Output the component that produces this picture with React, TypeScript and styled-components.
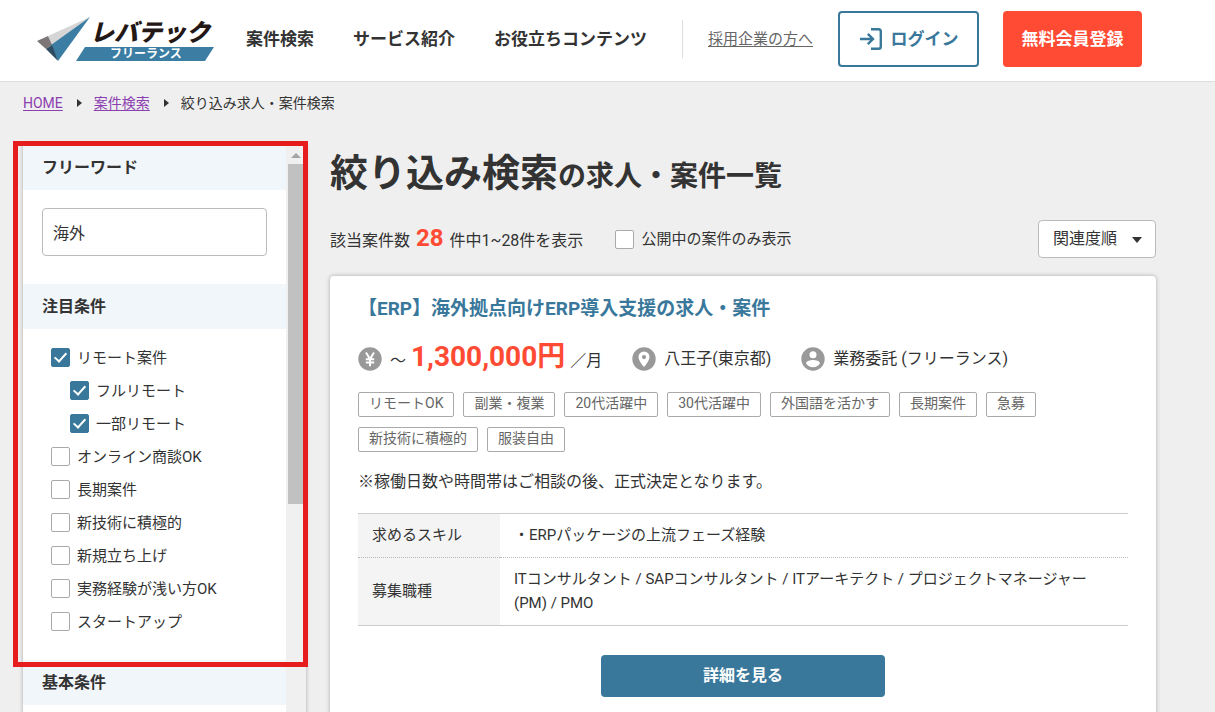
import React from "react";
import styled, { createGlobalStyle, css } from "styled-components";

const blue = "#39789b";
const red = "#ff4b33";

const GlobalStyle = createGlobalStyle`
  *, *::before, *::after { box-sizing: border-box; }
  body {
    margin: 0;
    background: #efefef;
    color: #333;
    font-family: Roboto, "Noto Sans CJK JP", sans-serif;
    font-size: 16px;
    line-height: 24px;
  }
  h1, h2, h3, p, ul { margin: 0; padding: 0; }
  ul { list-style: none; }
  input, select, button { font: inherit; color: inherit; }
`;

const Header = styled.header`
  display: flex;
  align-items: center;
  height: 82px;
  padding: 0 73px 4px 37px;
  background: #fff;
  border-bottom: 1px solid #dedede;
`;

const LogoLink = styled.a`
  display: block;
  height: 48px;
  svg { display: block; overflow: visible; }
`;

const Nav = styled.nav`
  display: flex;
  flex: 1;
  gap: 39px;
  margin-left: 30px;
`;

const NavLink = styled.a`
  color: #333;
  font-size: 17px;
  font-weight: 700;
  text-decoration: none;
  white-space: nowrap;
`;

const Companies = styled.div`
  display: flex;
  align-items: center;
  height: 38px;
  padding: 0 25px;
  border-left: 1px solid #dedede;
`;

const CompanyLink = styled.a`
  color: #666;
  font-size: 15px;
  white-space: nowrap;
  text-underline-offset: 2px;
`;

const HeaderButton = styled.button<{ $primary?: boolean }>`
  display: flex;
  align-items: center;
  justify-content: center;
  gap: 8px;
  height: 56px;
  padding: 0;
  border-radius: 4px;
  font-size: 17px;
  font-weight: 700;
  white-space: nowrap;
  ${(p) =>
    p.$primary
      ? css`
          width: 139px;
          margin-left: 24px;
          border: 0;
          background: ${red};
          color: #fff;
        `
      : css`
          width: 141px;
          border: 2px solid ${blue};
          background: #fff;
          color: ${blue};
        `}
`;

const Breadcrumb = styled.nav`
  display: flex;
  align-items: center;
  gap: 14px;
  padding: 9px 23px 0;
  font-size: 14px;
  a { color: #8b3fb0; text-underline-offset: 2px; }
`;

const Crumb = styled.span`
  display: flex;
  align-items: center;
  gap: 12px;
  & + &::before {
    content: "";
    border-left: 5px solid #333;
    border-top: 4px solid transparent;
    border-bottom: 4px solid transparent;
  }
`;

const Page = styled.div`
  display: grid;
  grid-template-columns: 283px minmax(0, 1fr);
  gap: 24px;
  padding: 30px 59px 24px 23px;
`;

const Sidebar = styled.aside`
  position: relative;
  display: flex;
  background: #fff;
  box-shadow: 0 0 4px rgba(0, 0, 0, 0.3);
`;

const Filters = styled.form`
  flex: 1;
`;

const FilterHeading = styled.h2`
  padding: 11px 19px 10px;
  background: #f1f6fb;
  font-size: 16px;
  font-weight: 700;
  line-height: 24px;
`;

const KeywordField = styled.div`
  padding: 18px 19px 28px;
`;

const KeywordInput = styled.input`
  display: block;
  width: 100%;
  height: 48px;
  padding: 0 10px;
  border: 1px solid #bbb;
  border-radius: 4px;
  background: #fff;
`;

const FilterList = styled.ul`
  padding: 12px 28px 22px;
`;

const FilterItem = styled.li<{ $nested?: boolean }>`
  padding-left: ${(p) => (p.$nested ? 19 : 0)}px;
`;

const CheckLabel = styled.label`
  display: flex;
  align-items: center;
  gap: 7px;
  height: 33px;
  font-size: 15px;
`;

const Checkbox = styled.input.attrs({ type: "checkbox" })`
  display: flex;
  justify-content: center;
  flex: none;
  appearance: none;
  width: 19px;
  height: 19px;
  margin: 0;
  border: 1px solid #aaa;
  border-radius: 2px;
  background: #fff;
  &:checked {
    border-color: ${blue};
    background: ${blue};
  }
  &:checked::after {
    content: "";
    width: 7px;
    height: 12px;
    margin-top: 1px;
    border: solid #fff;
    border-width: 0 2px 2px 0;
    transform: rotate(42deg);
  }
`;

const ScrollTrack = styled.div`
  display: flex;
  flex-direction: column;
  align-items: center;
  width: 20px;
  padding-top: 8px;
  background: #f0f0f0;
`;

const ScrollArrow = styled.span`
  border-bottom: 5px solid #a3a3a3;
  border-left: 5px solid transparent;
  border-right: 5px solid transparent;
`;

const ScrollThumb = styled.span`
  width: 16px;
  height: 340px;
  margin-top: 6px;
  background: #c1c1c1;
`;

const Highlight = styled.div`
  position: absolute;
  top: -4px;
  left: -10px;
  right: -2px;
  height: 526px;
  border: 5px solid #e71c1c;
  pointer-events: none;
`;

const Title = styled.h1`
  font-size: 38px;
  font-weight: 700;
  line-height: 56px;
  small { font-size: 28px; }
`;

const ResultBar = styled.div`
  display: flex;
  align-items: center;
  gap: 32px;
  margin: 15px 0 18px;
`;

const Count = styled.p`
  strong {
    margin: 0 2px;
    color: ${red};
    font-size: 24px;
  }
`;

const SortBox = styled.div`
  position: relative;
  margin-left: auto;
  &::after {
    content: "";
    position: absolute;
    top: 17px;
    right: 14px;
    border-top: 6px solid #333;
    border-left: 5px solid transparent;
    border-right: 5px solid transparent;
    pointer-events: none;
  }
`;

const SortSelect = styled.select`
  display: block;
  appearance: none;
  width: 118px;
  height: 38px;
  padding: 0 14px;
  border: 1px solid #bbb;
  border-radius: 4px;
  background: #fff;
`;

const Card = styled.article`
  padding: 19px 28px 32px;
  border-radius: 4px;
  background: #fff;
  box-shadow: 0 0 4px rgba(0, 0, 0, 0.3);
`;

const JobTitle = styled.h3`
  font-size: 19px;
  font-weight: 700;
  line-height: 28px;
  a { color: ${blue}; text-decoration: none; }
`;

const MetaRow = styled.ul`
  display: flex;
  flex-wrap: wrap;
  align-items: center;
  gap: 30px;
  margin-top: 16px;
`;

const Meta = styled.li`
  display: flex;
  align-items: center;
  gap: 8px;
  height: 40px;
  svg { flex: none; }
`;

const Pay = styled.strong`
  color: ${red};
  font-size: 28px;
  font-weight: 700;
`;

const Price = styled.span`
  display: flex;
  align-items: baseline;
  gap: 5px;
`;

const Tags = styled.ul`
  display: flex;
  flex-wrap: wrap;
  gap: 10px 9px;
  margin-top: 13px;
`;

const Tag = styled.li`
  height: 25px;
  padding: 0 10px;
  border: 1px solid #aaa;
  border-radius: 2px;
  color: #666;
  font-size: 14px;
  line-height: 21px;
`;

const Note = styled.p`
  margin: 18px 0 19px;
`;

const SpecTable = styled.table`
  width: 100%;
  border-collapse: collapse;
  border-top: 1px solid #ccc;
  border-bottom: 1px solid #ccc;
  font-size: 15px;
  tr + tr { border-top: 1px dotted #bbb; }
  th {
    width: 142px;
    background: #f4f4f4;
    font-weight: 400;
    text-align: left;
  }
  th, td { padding: 9px 14px 10px; }
`;

const DetailButton = styled.button`
  display: block;
  width: 284px;
  height: 42px;
  margin: 29px auto 0;
  padding: 0;
  border: 0;
  border-radius: 4px;
  background: ${blue};
  color: #fff;
  font-weight: 700;
`;

const Logo = () => (
  <svg width="179" height="48" viewBox="0 0 179 48" role="img" aria-label="レバテック フリーランス">
    <path d="M11 21 53 2 14 31z" fill="#d6d6d6" />
    <path d="M53 2 21 46 14 30z" fill="#3c7ea3" />
    <path d="M0 26 11 21 15 30 9 34z" fill="#7c7677" />
    <path d="M9 34 15 30 21 46z" fill="#2d4c62" />
    <path d="M48 32H177L168 46H39z" fill="#3c7ea3" />
    <text x="53" y="26" fill="#231815" fontFamily="'Noto Sans CJK JP', sans-serif" fontSize="24" fontWeight="900" fontStyle="italic">
      レバテック
    </text>
    <text x="73" y="43" fill="#fff" fontFamily="'Noto Sans CJK JP', sans-serif" fontSize="12" fontWeight="700">
      フリーランス
    </text>
  </svg>
);

const LoginIcon = () => (
  <svg width="24" height="24" viewBox="0 0 24 24" fill="none" stroke={blue} strokeWidth="2.4" aria-hidden="true">
    <path d="M12 2.200H19.500Q21.800 2.200 21.800 4.500V19.500Q21.800 21.800 19.500 21.800H12" />
    <path d="M1 12H13.500M8.800 6.800 14 12 8.800 17.200" />
  </svg>
);

const YenIcon = () => (
  <svg width="24" height="24" viewBox="0 0 24 24" aria-hidden="true">
    <circle cx="12" cy="12" r="11.700" fill="#999" />
    <path d="M8 5.500 12 12 16 5.500M12 12V19.200M7.800 12.200H16.200M7.800 15.600H16.200" fill="none" stroke="#fff" strokeWidth="2" />
  </svg>
);

const PinIcon = () => (
  <svg width="24" height="24" viewBox="0 0 24 24" aria-hidden="true">
    <circle cx="12" cy="12" r="11.700" fill="#999" />
    <path fill="#fff" fillRule="evenodd" d="M12 4.500a5.500 5.500 0 0 0-5.500 5.500C6.500 14 12 20 12 20s5.500-6 5.500-10A5.500 5.500 0 0 0 12 4.500zm0 3.500a2.100 2.100 0 1 1 0 4.200A2.100 2.100 0 0 1 12 8z" />
  </svg>
);

const PersonIcon = () => (
  <svg width="24" height="24" viewBox="0 0 24 24" aria-hidden="true">
    <circle cx="12" cy="12" r="11.700" fill="#999" />
    <circle cx="12" cy="7.800" r="3.500" fill="#fff" />
    <path d="M5 16.300C5 14 9.500 12.900 12 12.900S19 14 19 16.300C17.500 18.700 15 20.300 12 20.300S6.500 18.700 5 16.300z" fill="#fff" />
  </svg>
);

const conditions = [
  { label: "リモート案件", checked: true },
  { label: "フルリモート", checked: true, nested: true },
  { label: "一部リモート", checked: true, nested: true },
  { label: "オンライン商談OK" },
  { label: "長期案件" },
  { label: "新技術に積極的" },
  { label: "新規立ち上げ" },
  { label: "実務経験が浅い方OK" },
  { label: "スタートアップ" },
];

const tags = [
  "リモートOK", "副業・複業", "20代活躍中", "30代活躍中", "外国語を活かす",
  "長期案件", "急募", "新技術に積極的", "服装自由",
];

export default function App() {
  return (
    <>
      <GlobalStyle />
      <Header>
        <LogoLink href="#"><Logo /></LogoLink>
        <Nav>
          <NavLink href="#">案件検索</NavLink>
          <NavLink href="#">サービス紹介</NavLink>
          <NavLink href="#">お役立ちコンテンツ</NavLink>
        </Nav>
        <Companies><CompanyLink href="#">採用企業の方へ</CompanyLink></Companies>
        <HeaderButton type="button"><LoginIcon />ログイン</HeaderButton>
        <HeaderButton type="button" $primary>無料会員登録</HeaderButton>
      </Header>

      <Breadcrumb>
        <Crumb><a href="#">HOME</a></Crumb>
        <Crumb><a href="#">案件検索</a></Crumb>
        <Crumb>絞り込み求人・案件検索</Crumb>
      </Breadcrumb>

      <Page>
        <Sidebar>
          <Filters>
            <FilterHeading><label htmlFor="keyword">フリーワード</label></FilterHeading>
            <KeywordField>
              <KeywordInput id="keyword" type="text" defaultValue="海外" />
            </KeywordField>
            <FilterHeading>注目条件</FilterHeading>
            <FilterList>
              {conditions.map((c) => (
                <FilterItem key={c.label} $nested={c.nested}>
                  <CheckLabel>
                    <Checkbox defaultChecked={c.checked} />
                    {c.label}
                  </CheckLabel>
                </FilterItem>
              ))}
            </FilterList>
            <FilterHeading>基本条件</FilterHeading>
          </Filters>
          <ScrollTrack>
            <ScrollArrow />
            <ScrollThumb />
          </ScrollTrack>
          <Highlight />
        </Sidebar>

        <main>
          <Title>絞り込み検索<small>の求人・案件一覧</small></Title>
          <ResultBar>
            <Count>該当案件数 <strong>28</strong> 件中1~28件を表示</Count>
            <CheckLabel><Checkbox />公開中の案件のみ表示</CheckLabel>
            <SortBox>
              <SortSelect aria-label="並び順" defaultValue="関連度順">
                <option>関連度順</option>
              </SortSelect>
            </SortBox>
          </ResultBar>

          <Card>
            <JobTitle><a href="#">【ERP】海外拠点向けERP導入支援の求人・案件</a></JobTitle>
            <MetaRow>
              <Meta>
                <YenIcon />
                <Price>～<Pay>1,300,000円</Pay>／月</Price>
              </Meta>
              <Meta><PinIcon />八王子(東京都)</Meta>
              <Meta><PersonIcon />業務委託 (フリーランス)</Meta>
            </MetaRow>
            <Tags>
              {tags.map((t) => <Tag key={t}>{t}</Tag>)}
            </Tags>
            <Note>※稼働日数や時間帯はご相談の後、正式決定となります。</Note>
            <SpecTable>
              <tbody>
                <tr>
                  <th scope="row">求めるスキル</th>
                  <td>・ERPパッケージの上流フェーズ経験</td>
                </tr>
                <tr>
                  <th scope="row">募集職種</th>
                  <td>ITコンサルタント / SAPコンサルタント / ITアーキテクト / プロジェクトマネージャー(PM) / PMO</td>
                </tr>
              </tbody>
            </SpecTable>
            <DetailButton type="button">詳細を見る</DetailButton>
          </Card>
        </main>
      </Page>
    </>
  );
}
